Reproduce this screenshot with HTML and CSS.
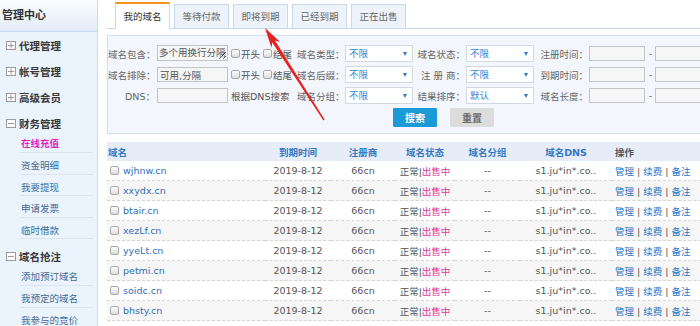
FILE: index.html
```html
<!DOCTYPE html>
<html>
<head>
    <meta charset="utf-8">
    <title>我的域名</title>
    <link rel="stylesheet" href="styles.css">
</head>
<body>
<div class="page">
    <div class="sidebar">
        <div class="side-title">管理中心</div>
        <div class="menu-head"><svg class="fold" width="10" height="9" viewBox="0 0 10 9"><rect x="0.5" y="0.5" width="9" height="8" fill="#fff" stroke="#9a9a9a"/><path d="M2 4.5H8M5 1.5V7.5" stroke="#9a9a9a"/></svg>代理管理</div>
        <div class="menu-head"><svg class="fold" width="10" height="9" viewBox="0 0 10 9"><rect x="0.5" y="0.5" width="9" height="8" fill="#fff" stroke="#9a9a9a"/><path d="M2 4.5H8M5 1.5V7.5" stroke="#9a9a9a"/></svg>帐号管理</div>
        <div class="menu-head"><svg class="fold" width="10" height="9" viewBox="0 0 10 9"><rect x="0.5" y="0.5" width="9" height="8" fill="#fff" stroke="#9a9a9a"/><path d="M2 4.5H8M5 1.5V7.5" stroke="#9a9a9a"/></svg>高级会员</div>
        <div class="menu-head"><svg class="fold" width="10" height="9" viewBox="0 0 10 9"><rect x="0.5" y="0.5" width="9" height="8" fill="#fff" stroke="#9a9a9a"/><path d="M2 4.5H8" stroke="#9a9a9a"/></svg>财务管理</div>
        <ul class="submenu">
            <li class="current">在线充值</li>
            <li>资金明细</li>
            <li>我要提现</li>
            <li>申请发票</li>
            <li>临时借款</li>
        </ul>
        <div class="menu-head"><svg class="fold" width="10" height="9" viewBox="0 0 10 9"><rect x="0.5" y="0.5" width="9" height="8" fill="#fff" stroke="#9a9a9a"/><path d="M2 4.5H8" stroke="#9a9a9a"/></svg>域名抢注</div>
        <ul class="submenu">
            <li>添加预订域名</li>
            <li>我预定的域名</li>
            <li>我参与的竞价</li>
        </ul>
    </div>

    <div class="main">
        <ul class="tabs">
            <li class="active">我的域名</li>
            <li>等待付款</li>
            <li>即将到期</li>
            <li>已经到期</li>
            <li>正在出售</li>
        </ul>

        <form class="filter">
            <div class="frow">
                <label>域名包含：</label>
                <span class="cell"><textarea class="txt area" placeholder="多个用换行分隔"></textarea></span>
                <span class="checks"><input type="checkbox">开头<input type="checkbox" class="second">结尾</span>
                <label>域名类型：</label>
                <span class="sel"><select><option>不限</option></select></span>
                <label>域名状态：</label>
                <span class="sel"><select><option>不限</option></select></span>
                <label>注册时间：</label>
                <span class="cell"><input type="text" class="txt short"></span>
                <span class="dash">-</span>
                <span class="cell"><input type="text" class="txt short"></span>
            </div>
            <div class="frow">
                <label>域名排除：</label>
                <span class="cell"><input type="text" class="txt" value="可用,分隔"></span>
                <span class="checks"><input type="checkbox">开头<input type="checkbox" class="second">结尾</span>
                <label>域名后缀：</label>
                <span class="sel"><select><option>不限</option></select></span>
                <label>注 册 商：</label>
                <span class="sel"><select><option>不限</option></select></span>
                <label>到期时间：</label>
                <span class="cell"><input type="text" class="txt short"></span>
                <span class="dash">-</span>
                <span class="cell"><input type="text" class="txt short"></span>
            </div>
            <div class="frow">
                <label>DNS：</label>
                <span class="cell"><input type="text" class="txt"></span>
                <span class="checks">根据DNS搜索</span>
                <label>域名分组：</label>
                <span class="sel"><select><option>不限</option></select></span>
                <label>结果排序：</label>
                <span class="sel"><select><option>默认</option></select></span>
                <label>域名长度：</label>
                <span class="cell"><input type="text" class="txt short"></span>
                <span class="dash">-</span>
                <span class="cell"><input type="text" class="txt short"></span>
            </div>
            <div class="btns">
                <button type="submit" class="btn-search">搜索</button>
                <button type="reset" class="btn-reset">重置</button>
            </div>
        </form>

        <table class="list">
            <colgroup>
                <col style="width:158px"><col style="width:66px"><col style="width:64px"><col style="width:60px"><col style="width:65px"><col style="width:92px"><col>
            </colgroup>
            <thead>
                <tr>
                    <th class="name">域名</th>
                    <th>到期时间</th>
                    <th>注册商</th>
                    <th>域名状态</th>
                    <th>域名分组</th>
                    <th>域名DNS</th>
                    <th class="ops">操作</th>
                </tr>
            </thead>
            <tbody id="rows"></tbody>
        </table>
    </div>
</div>

<svg class="arrow" width="700" height="326" viewBox="0 0 700 326">
    <polygon points="265,28 280.2,42.1 275.0,40.6 324.6,119.6 323.4,120.4 272.3,42.4 271.5,47.7" fill="#e4251f"/>
</svg>

<script>
    var domains = ['wjhnw.cn', 'xxydx.cn', 'btair.cn', 'xezLf.cn', 'yyeLt.cn', 'petmi.cn', 'soidc.cn', 'bhsty.cn'];
    var tbody = document.getElementById('rows');
    domains.forEach(function (d) {
        var tr = document.createElement('tr');
        tr.innerHTML =
            '<td class="name"><input type="checkbox"><a>' + d + '</a></td>' +
            '<td>2019-8-12</td>' +
            '<td>66cn</td>' +
            '<td>正常|<span class="sale">出售中</span></td>' +
            '<td>--</td>' +
            '<td>s1.ju*in*.co..</td>' +
            '<td class="ops"><a>管理</a> | <a>续费</a> | <a>备注</a></td>';
        tbody.appendChild(tr);
    });
</script>
</body>
</html>
```

FILE: styles.css
```css
html, body {
    margin: 0;
    padding: 0;
    overflow: hidden;
}
body {
    font-family: "DejaVu Sans", "Noto Sans CJK SC", sans-serif;
    font-size: 9.5px;
    color: #555;
    background: #fff;
}
.page {
    display: flex;
    align-items: flex-start;
}

/* sidebar */
.sidebar {
    flex: 0 0 97px;
    min-height: 340px;
    background: #ebf4fd;
    border-right: 1px solid #c7dbef;
}
.side-title {
    height: 31px;
    line-height: 31px;
    padding-left: 2px;
    font-size: 11px;
    font-weight: bold;
    color: #333;
    background: linear-gradient(#fbfdff, #e2ecf8);
    border-bottom: 1px solid #c7dbef;
}
.menu-head {
    height: 26px;
    display: flex;
    align-items: center;
    padding-left: 6px;
    font-size: 10.5px;
    font-weight: bold;
    color: #3a3a3a;
}
.fold {
    margin-right: 3px;
}
.submenu {
    list-style: none;
    margin: 0 4px 4px 20px;
    padding: 0;
}
.submenu li {
    padding: 5px 0 0 1px;
    line-height: 15.5px;
    border-bottom: 1px solid #d8e4ef;
    color: #3f6b96;
}
.submenu li:first-child {
    padding-top: 0;
    line-height: 16px;
}
.submenu li.current {
    color: #e01ec4;
    font-weight: bold;
}

/* main */
.main {
    flex: 0 0 620px;
    margin-left: 9px;
}
.tabs {
    list-style: none;
    margin: 0;
    padding: 0 0 0 8px;
    height: 28px;
    display: flex;
    align-items: flex-end;
    gap: 4px;
    border-bottom: 1px solid #c7d9ee;
}
.tabs li {
    width: 55px;
    box-sizing: border-box;
    line-height: 23px;
    text-align: center;
    background: #eef3fb;
    border: 1px solid #c7d9ee;
    border-bottom: none;
    color: #666;
}
.tabs li.active {
    line-height: 25px;
    margin-bottom: -1px;
    background: #fff;
    border-top: 2px solid #f7941d;
    color: #333;
}

.filter {
    margin: 6px 0 0;
    padding: 7px 0 6px;
    background: #f3f6fc;
    border: 1px solid #d2e0f0;
}
.frow {
    display: grid;
    grid-template-columns: 47px 73px 69px 47px 70px 51px 75px 48px 59px 7px 66px;
    height: 21px;
    align-items: center;
    white-space: nowrap;
}
.frow label {
    text-align: right;
    color: #666;
}
.txt {
    display: block;
    box-sizing: border-box;
    margin: 0 0 0 2px;
    width: 71px;
    height: 15px;
    padding: 0 2px;
    border: 1px solid #c4c4c4;
    background: #f6f6f6;
    font: inherit;
    color: #555;
    line-height: 13px;
}
textarea.area {
    overflow: hidden;
    resize: both;
    padding: 0 1px;
    height: 16px;
    margin-top: -2px;
    white-space: nowrap;
}
.txt::placeholder {
    color: #555;
    opacity: 1;
}
.txt.short {
    width: 56px;
    margin-left: 1px;
}
.checks {
    display: flex;
    align-items: center;
    padding-left: 3px;
    color: #555;
}
input[type=checkbox] {
    appearance: none;
    -webkit-appearance: none;
    box-sizing: border-box;
    width: 9px;
    height: 9px;
    margin: 0 1px 0 0;
    border: 1px solid #a9a9a9;
    border-radius: 2px;
    background: linear-gradient(#fdfdfd, #dcdcdc);
}
.checks .second {
    margin-left: 3px;
}
.sel {
    position: relative;
    display: block;
    margin-left: 1px;
    width: 68px;
}
.sel select {
    appearance: none;
    -webkit-appearance: none;
    display: block;
    box-sizing: border-box;
    width: 68px;
    height: 17px;
    padding: 0 0 0 3px;
    border: 1px solid #d2d9e2;
    background: #fff;
    color: #2d85d6;
    font: inherit;
    border-radius: 0;
}
.sel::after {
    content: "";
    position: absolute;
    right: 6px;
    top: 7px;
    border-left: 2.5px solid transparent;
    border-right: 2.5px solid transparent;
    border-top: 4px solid #2a7ec8;
}
.dash {
    text-align: center;
    color: #666;
}
.btns {
    margin-top: 2px;
    padding-left: 285px;
    display: flex;
    gap: 13px;
}
.btns button {
    width: 44px;
    height: 19px;
    border: none;
    border-radius: 1px;
    font: inherit;
    font-size: 10px;
    font-weight: bold;
    cursor: pointer;
}
.btn-search {
    background: #1b9ad6;
    color: #fff;
}
.btn-reset {
    background: #dcdcdc;
    color: #6a6a6a;
}

/* domain table */
.list {
    margin-top: 8px;
    width: 620px;
    border-collapse: collapse;
    table-layout: fixed;
}
.list th {
    height: 19px;
    padding: 0;
    background: #e6edf8;
    color: #3577c2;
    font-weight: bold;
    text-align: center;
}
.list th.name {
    text-align: left;
    padding-left: 1px;
}
.list th.ops {
    text-align: left;
    padding-left: 3px;
    color: #555;
}
.list td {
    height: 19px;
    padding: 0;
    border-bottom: 1px dashed #d6d6d6;
    text-align: center;
    white-space: nowrap;
}
.list tbody tr:nth-child(even) td {
    background: #f6f6f6;
}
.list td.name {
    text-align: left;
    padding-left: 3px;
}
.list td.name input {
    vertical-align: -1px;
    margin-right: 4px;
}
.list td.name a {
    color: #2e6fb8;
}
.list td.ops {
    text-align: left;
    padding-left: 3px;
}
.list td.ops a {
    color: #2b76c6;
}
.sale {
    color: #e03898;
}

.arrow {
    position: absolute;
    left: 0;
    top: 0;
    pointer-events: none;
}
```
